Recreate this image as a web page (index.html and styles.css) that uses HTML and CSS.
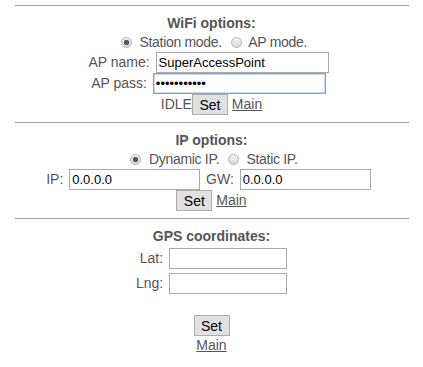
FILE: index.html
```html
<!DOCTYPE html>
<html>
<head>
<meta charset="utf-8">
<title>Settings</title>
<link rel="stylesheet" href="styles.css">
</head>
<body>
<div class="page">
  <div class="rule"></div>
  <section class="block">
    <div class="title">WiFi options:</div>
    <div class="line radios"><input type="radio" name="mode" class="radio" checked> Station mode. <input type="radio" name="mode" class="radio"> AP mode.</div>
    <div class="line field shifted">AP name: <input type="text" class="text w-name" value="SuperAccessPoint"></div>
    <div class="line field shifted">AP pass: <input type="password" class="text w-name focused" value="abcdefghijk"></div>
    <div class="line actions">IDLE<button class="btn">Set</button> <a href="#" class="link">Main</a></div>
  </section>
  <div class="rule"></div>
  <section class="block">
    <div class="title">IP options:</div>
    <div class="line radios"><input type="radio" name="ip" class="radio" checked> Dynamic IP. <input type="radio" name="ip" class="radio"> Static IP.</div>
    <div class="line field shifted">IP: <input type="text" class="text w-ip" value="0.0.0.0"> GW: <input type="text" class="text w-ip" value="0.0.0.0"></div>
    <div class="line actions"><button class="btn">Set</button> <a href="#" class="link">Main</a></div>
  </section>
  <div class="rule"></div>
  <section class="block">
    <div class="title">GPS coordinates:</div>
    <div class="coords">
      <label class="coord-label">Lat:</label><input type="text" class="text w-coord">
      <label class="coord-label">Lng:</label><input type="text" class="text w-coord">
    </div>
    <div class="spacer"></div>
    <div class="line actions"><button class="btn">Set</button></div>
    <div class="main-line"><a href="#" class="link">Main</a></div>
  </section>
</div>
</body>
</html>
```

FILE: styles.css
```css
html, body {
  margin: 0;
  padding: 0;
  background: #ffffff;
}

body {
  font-family: "Liberation Sans", Arial, sans-serif;
  font-size: 14px;
  color: #555555;
}

.page {
  padding-top: 5px;
}

.rule {
  width: 394px;
  height: 1px;
  margin: 0 auto;
  background: #a0a0a0;
}

.block {
  text-align: center;
  padding-top: 7px;
  padding-bottom: 7px;
}

.title {
  font-weight: bold;
  line-height: 20px;
  height: 20px;
}

.line {
  height: 19px;
  line-height: 19px;
  white-space: nowrap;
}

.radios {
  letter-spacing: -0.3px;
}

.field {
  height: 21px;
  line-height: 21px;
}

.shifted {
  padding-right: 4px;
}

.actions {
  height: 21px;
  line-height: 21px;
}

.radio {
  -webkit-appearance: none;
  appearance: none;
  width: 11px;
  height: 11px;
  margin: 0 4px 0 5px;
  padding: 0;
  border: 1px solid #b4b4b4;
  border-radius: 50%;
  background: linear-gradient(#f2f2f2, #dadada);
  vertical-align: -1px;
  box-sizing: border-box;
}

.radio:checked {
  background: radial-gradient(circle, #5a5a5a 0, #5a5a5a 2.3px, rgba(90,90,90,0) 3.1px), linear-gradient(#f2f2f2, #dadada);
}

.text {
  box-sizing: border-box;
  height: 21px;
  margin: 0 2px;
  padding: 0 2px;
  border: 1px solid #a9a9a9;
  background: #ffffff;
  font-family: "Liberation Sans", Arial, sans-serif;
  font-size: 13px;
  color: #000000;
  vertical-align: top;
  outline: none;
}

.focused {
  border-color: #7aa3d6;
  box-shadow: inset 0 0 0 1px #c9dbf2;
}

.w-name {
  width: 173px;
}

.w-ip {
  width: 131px;
}

.w-coord {
  width: 118px;
  margin: 0;
}

.btn {
  box-sizing: border-box;
  width: 36px;
  height: 21px;
  margin: 0;
  padding: 0;
  border: 1px solid #adadad;
  background: #e1e1e1;
  font-family: "Liberation Sans", Arial, sans-serif;
  font-size: 14px;
  color: #000000;
  vertical-align: top;
}

.link {
  color: #555555;
  text-decoration: underline;
}

.coords {
  display: grid;
  grid-template-columns: auto auto;
  justify-content: center;
  column-gap: 6px;
  row-gap: 4px;
  margin-top: 2px;
}

.coord-label {
  text-align: right;
  line-height: 21px;
}

.spacer {
  height: 21px;
}

.main-line {
  line-height: 18px;
}
```
